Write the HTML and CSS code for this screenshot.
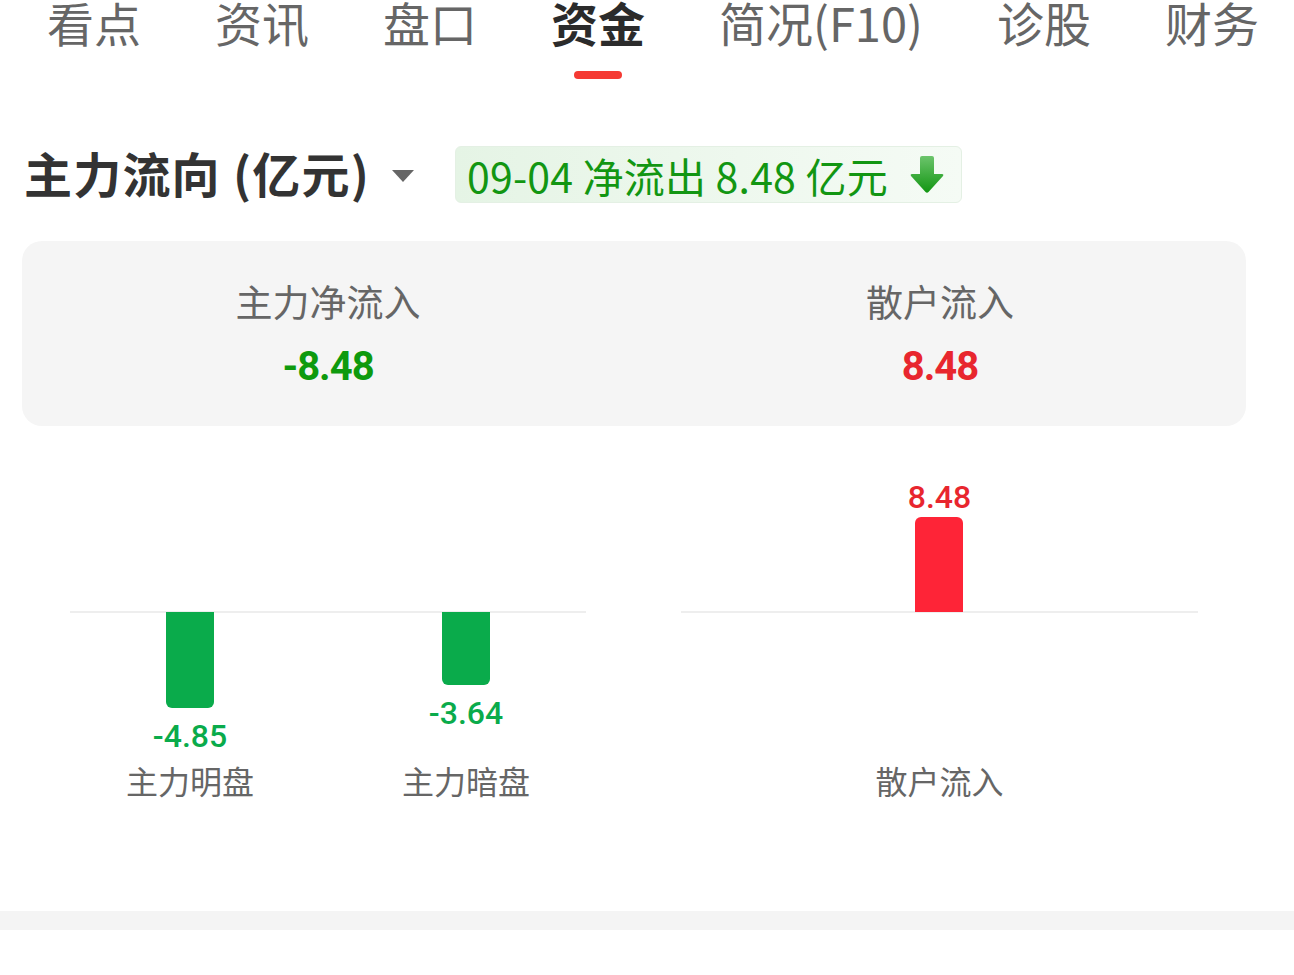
FILE: index.html
```html
<!DOCTYPE html>
<html lang="zh-CN">
<head>
    <meta charset="UTF-8">
    <title>资金</title>
    <link rel="stylesheet" href="styles.css">
</head>
<body>
<nav class="tabs">
    <a class="tab">看点</a>
    <a class="tab">资讯</a>
    <a class="tab">盘口</a>
    <a class="tab active">资金</a>
    <a class="tab">简况(F10)</a>
    <a class="tab">诊股</a>
    <a class="tab">财务</a>
</nav>

<section class="flow">
    <div class="flow-head">
        <h2 class="flow-title">主力流向 (亿元)</h2>
        <span class="caret"></span>
        <div class="badge">
            <span class="badge-text">09-04 净流出 8.48 亿元</span>
            <svg class="badge-arrow" width="36" height="38" viewBox="0 0 36 38">
                <defs>
                    <linearGradient id="arrowFill" x1="0" y1="0" x2="0" y2="1">
                        <stop offset="0" stop-color="#6cc46c"/>
                        <stop offset="1" stop-color="#129612"/>
                    </linearGradient>
                </defs>
                <path d="M11 2 Q11 0 13 0 L23 0 Q25 0 25 2 L25 18 L33 18 Q35 18 34 20 L19.5 36 Q18 37.5 16.5 36 L2 20 Q1 18 3 18 L11 18 Z" fill="url(#arrowFill)"/>
            </svg>
        </div>
    </div>

    <div class="summary">
        <div class="summary-item">
            <div class="summary-label">主力净流入</div>
            <div class="summary-value down">-8.48</div>
        </div>
        <div class="summary-item">
            <div class="summary-label">散户流入</div>
            <div class="summary-value up">8.48</div>
        </div>
    </div>

    <div class="charts">
        <div class="chart two">
            <div class="col">
                <div class="col-up"></div>
                <div class="col-down">
                    <div class="bar bar-down" style="height: 96px"></div>
                    <div class="bar-value down">-4.85</div>
                </div>
                <div class="col-name">主力明盘</div>
            </div>
            <div class="col">
                <div class="col-up"></div>
                <div class="col-down">
                    <div class="bar bar-down" style="height: 73px"></div>
                    <div class="bar-value down">-3.64</div>
                </div>
                <div class="col-name">主力暗盘</div>
            </div>
        </div>
        <div class="chart one">
            <div class="col">
                <div class="col-up">
                    <div class="bar-value up">8.48</div>
                    <div class="bar bar-up" style="height: 95px"></div>
                </div>
                <div class="col-down"></div>
                <div class="col-name">散户流入</div>
            </div>
        </div>
    </div>
</section>

<div class="divider"></div>
</body>
</html>
```

FILE: styles.css
```css
body {
    margin: 0;
    background: #fff;
    font-family: "Noto Sans CJK SC", "Noto Sans", sans-serif;
    color: #333;
}

/* 顶部标签 */
.tabs {
    display: flex;
    gap: 74px;
    padding-left: 47px;
}

.tab {
    display: flex;
    flex-direction: column;
    align-items: center;
    font-size: 47px;
    line-height: 44px;
    color: #666;
}

.tab::after {
    content: "";
    width: 48px;
    height: 8px;
    margin-top: 27px;
    border-radius: 4px;
}

.tab.active {
    color: #2b2b2b;
    font-weight: bold;
}

.tab.active::after {
    background: #f53a33;
}

/* 主力流向 */
.flow-head {
    display: flex;
    align-items: center;
    margin-top: 67px;
    padding-left: 24px;
}

.flow-title {
    margin: 0;
    font-size: 48px;
    line-height: 50px;
    font-weight: bold;
    letter-spacing: 1.2px;
    color: #333;
    position: relative;
    top: -3px;
}

.caret {
    width: 0;
    height: 0;
    margin-left: 22px;
    margin-top: 2px;
    border-left: 11px solid transparent;
    border-right: 11px solid transparent;
    border-top: 12px solid #666;
}

.badge {
    display: flex;
    align-items: center;
    height: 55px;
    margin-left: 41px;
    padding: 0 16px 0 11px;
    border: 1px solid #e4f0e4;
    border-radius: 6px;
    background: linear-gradient(90deg, #e5f4e5, #f5fbf5);
}

.badge-text {
    font-size: 41px;
    line-height: 48px;
    letter-spacing: 0.2px;
    color: #129612;
}

.badge-arrow {
    margin-left: 21px;
}

.summary {
    display: flex;
    margin: 38px 48px 0 22px;
    padding: 38px 0 37px;
    border-radius: 20px;
    background: #f5f5f5;
}

.summary-item {
    flex: 1;
    text-align: center;
}

.summary-label {
    font-size: 37px;
    line-height: 44px;
    color: #666;
}

.summary-value {
    margin-top: 22px;
    font-family: Roboto, "Noto Sans", sans-serif;
    font-size: 40px;
    line-height: 44px;
    font-weight: bold;
    letter-spacing: -1px;
}

.down {
    color: #0e9a0e;
}

.up {
    color: #e8262e;
}

/* 柱状图 */
.charts {
    display: flex;
    gap: 95px;
    margin-top: 45px;
    padding-left: 70px;
}

.chart {
    display: flex;
    width: 516px;
    background: linear-gradient(#eee, #eee) 0 140px / 100% 2px no-repeat;
}

.chart.two {
    justify-content: space-between;
    padding: 0 40px;
    box-sizing: border-box;
}

.chart.one {
    justify-content: center;
    width: 517px;
}

.col {
    width: 160px;
    display: flex;
    flex-direction: column;
    align-items: center;
}

.col-up {
    height: 141px;
    display: flex;
    flex-direction: column;
    justify-content: flex-end;
    align-items: center;
}

.col-down {
    height: 148px;
    display: flex;
    flex-direction: column;
    align-items: center;
}

.bar {
    width: 48px;
}

.bar-up {
    background: #fe2437;
    border-radius: 6px 6px 0 0;
}

.bar-down {
    background: #0aab4b;
    border-radius: 0 0 6px 6px;
}

.bar-value {
    font-family: Roboto, "Noto Sans", sans-serif;
    font-size: 32px;
    line-height: 36px;
    font-weight: 500;
}

.col-down .bar-value {
    margin-top: 10px;
    color: #0aab4b;
}

.col-up .bar-value {
    margin-bottom: 2px;
}

.col-name {
    font-size: 32px;
    line-height: 40px;
    color: #666;
}

.divider {
    height: 19px;
    margin-top: 111px;
    background: #f4f4f4;
}
```
